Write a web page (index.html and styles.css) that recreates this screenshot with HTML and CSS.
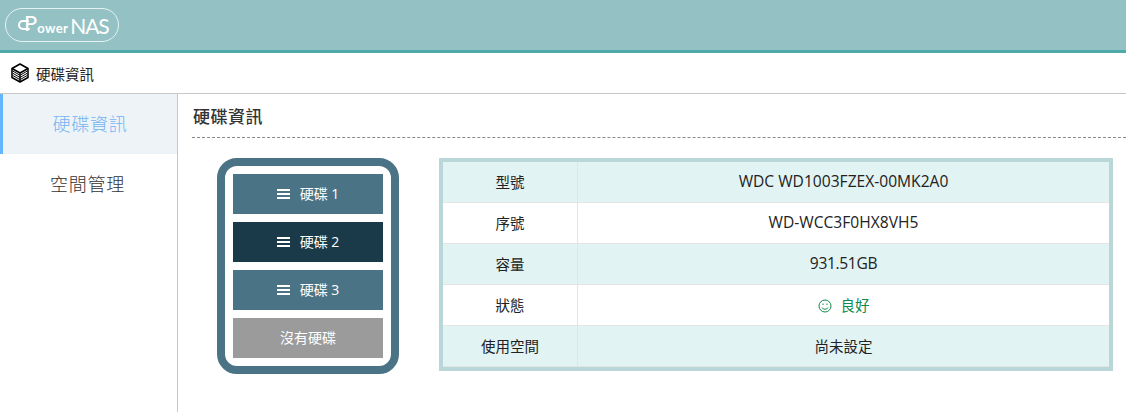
FILE: index.html
```html
<!DOCTYPE html>
<html lang="zh-Hant">
<head>
<meta charset="utf-8">
<title>硬碟資訊</title>
<link rel="stylesheet" href="styles.css">
</head>
<body>
<header class="topbar">
  <div class="logo">
    <svg class="logo-mark" width="14" height="16" viewBox="0 0 14 16" fill="none" stroke="#fff" stroke-width="2" stroke-linecap="round" aria-hidden="true">
      <path d="M11 4H6a4 4 0 0 0 0 8h6"/>
    </svg>
    <span class="logo-p">P</span><span class="logo-power">ower</span><span class="logo-nas">NAS</span>
  </div>
</header>
<div class="crumb">
  <svg class="crumb-icon" width="18" height="20" viewBox="0 0 18 20" fill="none" stroke="#000" stroke-width="1.600" stroke-linejoin="round" aria-hidden="true">
    <path d="M9 1 17 5.500V14.500L9 19 1 14.500V5.500Z"/>
    <path d="M1 5.500 9 10 17 5.500M9 10V19"/>
    <path d="M2 8.200 8.500 12M2 10.400 8.500 14.200M2 12.600 8.500 16.400M16 8.200 9.500 12M16 10.400 9.500 14.200M16 12.600 9.500 16.400" stroke-width="1"/>
  </svg>
  <span>硬碟資訊</span>
</div>
<div class="layout">
  <nav class="sidebar">
    <a class="side-item active">硬碟資訊</a>
    <a class="side-item">空間管理</a>
  </nav>
  <main class="content">
    <h1 class="title">硬碟資訊</h1>
    <div class="panels">
      <div class="disks">
        <button class="disk"><span class="bars"></span>硬碟 1</button>
        <button class="disk selected"><span class="bars"></span>硬碟 2</button>
        <button class="disk"><span class="bars"></span>硬碟 3</button>
        <button class="disk empty">沒有硬碟</button>
      </div>
      <table class="info">
        <tr><th>型號</th><td class="latin">WDC WD1003FZEX-00MK2A0</td></tr>
        <tr><th>序號</th><td class="latin">WD-WCC3F0HX8VH5</td></tr>
        <tr><th>容量</th><td class="size">931.51GB</td></tr>
        <tr><th>狀態</th><td class="good">
          <svg class="smile" width="14" height="14" viewBox="0 0 14 14" fill="none" stroke="#0f8a4b" aria-hidden="true">
            <circle cx="7" cy="7" r="6"/>
            <path d="M4 8.500a3.400 3.400 0 0 0 6 0"/>
            <path d="M5 4.500v1.500M9 4.500v1.500"/>
          </svg>良好</td></tr>
        <tr><th>使用空間</th><td>尚未設定</td></tr>
      </table>
    </div>
  </main>
</div>
</body>
</html>
```
FILE: styles.css
```css
* { box-sizing: border-box; }
html, body { height: 100%; }
body {
  margin: 0;
  overflow: hidden;
  background: #fff;
  color: #222;
  font-family: "Open Sans", "Noto Sans CJK TC", sans-serif;
  display: flex;
  flex-direction: column;
}
.topbar {
  height: 53px;
  flex: none;
  background: #94c2c4;
  border-bottom: 3px solid #4eaaa8;
  padding: 8px 5px 0;
}
.logo {
  width: 114px;
  height: 34px;
  border: 1px solid #e6f2f2;
  border-radius: 17px;
  display: flex;
  align-items: center;
  padding-left: 18px;
  color: #fff;
  font-family: "Lato", sans-serif;
  line-height: 1;
  position: relative;
}
.logo-mark { position: absolute; left: 11px; top: 8px; }
.logo-p { font-size: 22px; font-weight: 400; margin-top: -4px; }
.logo-power { font-size: 13px; font-weight: 700; letter-spacing: 0.400px; margin: 6px 2px 0 0; }
.logo-nas { font-size: 21px; font-weight: 400; letter-spacing: -1.200px; }
.crumb {
  height: 41px;
  flex: none;
  border-bottom: 1px solid #c8c8c8;
  display: flex;
  align-items: center;
  padding-left: 11px;
  gap: 7px;
  font-size: 14.500px;
  color: #222;
}
.layout { flex: 1; display: flex; min-height: 0; }
.sidebar {
  width: 178px;
  flex: none;
  border-right: 1px solid #c8c8c8;
}
.side-item {
  display: flex;
  height: 60px;
  align-items: center;
  justify-content: center;
  padding: 0 2px 2px 0;
  font-size: 18px;
  letter-spacing: 0.800px;
  color: #333;
  font-weight: 300;
}
.side-item.active {
  background: #eef3f8;
  color: #72b4f2;
  border-left: 3px solid #66b5ff;
  padding-left: 2px;
}
.content { flex: 1; padding-left: 14px; min-width: 0; }
.title {
  margin: 0;
  height: 44px;
  display: flex;
  align-items: center;
  padding-left: 1px;
  font-size: 17px;
  font-weight: 500;
  letter-spacing: 0.500px;
  color: #333;
  border-bottom: 1px dashed #8a8a8a;
}
.panels {
  display: flex;
  align-items: flex-start;
  margin-top: 20px;
  padding-left: 25px;
  gap: 40px;
}
.disks {
  width: 182px;
  flex: none;
  border: 8px solid #4b7386;
  border-radius: 20px;
  padding: 8px;
  display: flex;
  flex-direction: column;
  gap: 8px;
}
.disk {
  height: 40px;
  border: 0;
  margin: 0;
  padding: 0 0 2px;
  background: #4b7386;
  color: #fff;
  font: inherit;
  font-size: 14px;
  display: flex;
  align-items: center;
  justify-content: center;
}
.disk.selected { background: #1b3a49; }
.disk.empty { background: #9b9b9b; }
.bars {
  width: 13px;
  height: 10px;
  margin: 2px 10px 0 0;
  border-top: 2px solid #fff;
  border-bottom: 2px solid #fff;
  position: relative;
}
.bars::after {
  content: "";
  position: absolute;
  left: 0;
  right: 0;
  top: 2px;
  height: 2px;
  background: #fff;
}
.info {
  width: 674px;
  flex: none;
  border-collapse: separate;
  border-spacing: 0;
  border: 4px solid #b9d7d9;
  font-size: 14.500px;
  color: #222;
}
.info th, .info td {
  height: 41px;
  padding: 0 0 2px;
  text-align: center;
  font-weight: 400;
  border-bottom: 1px solid #e4e4e4;
}
.info th { width: 135px; border-right: 1px solid #e4e4e4; }
.info tr:nth-child(odd) th, .info tr:nth-child(odd) td { background: #e1f3f2; }
.info td.latin { font-size: 15.600px; }
.info td.size { font-size: 15.600px; letter-spacing: -0.350px; }
.good { color: #0f8a4b; }
.smile { vertical-align: -2px; margin-right: 9px; }
```
